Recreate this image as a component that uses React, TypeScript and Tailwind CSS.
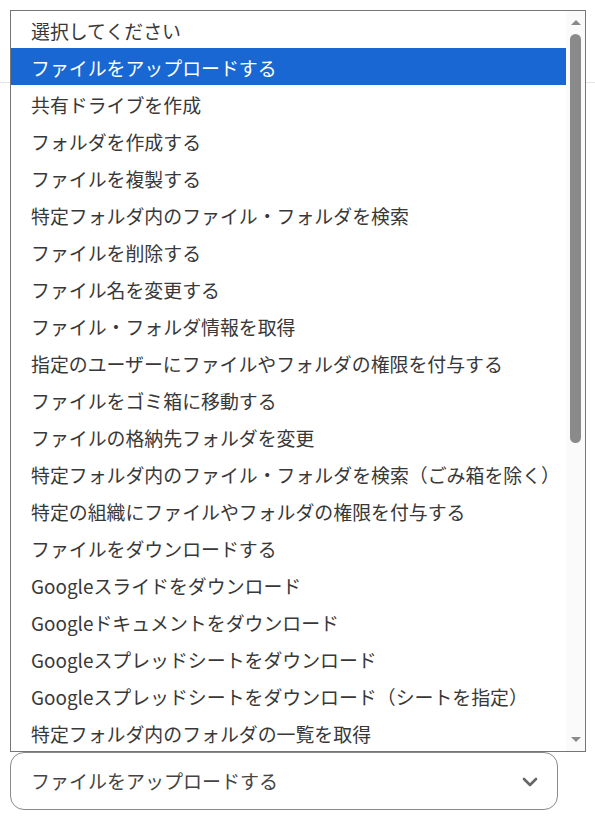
import React from "react";

const options = [
  "選択してください",
  "ファイルをアップロードする",
  "共有ドライブを作成",
  "フォルダを作成する",
  "ファイルを複製する",
  "特定フォルダ内のファイル・フォルダを検索",
  "ファイルを削除する",
  "ファイル名を変更する",
  "ファイル・フォルダ情報を取得",
  "指定のユーザーにファイルやフォルダの権限を付与する",
  "ファイルをゴミ箱に移動する",
  "ファイルの格納先フォルダを変更",
  "特定フォルダ内のファイル・フォルダを検索（ごみ箱を除く）",
  "特定の組織にファイルやフォルダの権限を付与する",
  "ファイルをダウンロードする",
  "Googleスライドをダウンロード",
  "Googleドキュメントをダウンロード",
  "Googleスプレッドシートをダウンロード",
  "Googleスプレッドシートをダウンロード（シートを指定）",
  "特定フォルダ内のフォルダの一覧を取得",
];

export default function App() {
  return (
    <div
      className="relative w-[595px] h-[817px] bg-white overflow-hidden flex flex-col"
      style={{ fontFamily: '"Noto Sans CJK JP", "Noto Sans", sans-serif' }}
    >
      <div className="h-[83px] border-b border-[#e3e3e3] shrink-0" />
      <div className="flex-1" />
      <div className="px-[10px] pb-[7px] relative">
        <div className="w-[548px] h-[58px] rounded-[14px] border border-[#8a8a8a] flex items-center justify-between pl-[20px] pr-[19px] text-[19px] text-[#444]">
          <span>ファイルをアップロードする</span>
          <svg width="16" height="10" viewBox="0 0 16 10" className="mt-[2px]">
            <path d="M2 2 L8 8 L14 2" fill="none" stroke="#666" strokeWidth="2.6" strokeLinecap="round" strokeLinejoin="round" />
          </svg>
        </div>
      </div>

      <div className="absolute left-[10px] top-[10px] w-[576px] h-[742px] border border-[#767676] bg-white flex">
        <div className="flex-1 flex flex-col">
          {options.map((o, i) => (
            <div
              key={i}
              className={
                "h-[37px] shrink-0 flex items-center pl-[20px] pt-[3px] text-[18.9px] whitespace-nowrap " +
                (i === 1 ? "bg-[#1967d2] text-white" : "text-[#383838]")
              }
            >
              {o}
            </div>
          ))}
        </div>
        <div className="w-[19px] bg-[#fafafa] flex flex-col items-center">
          <svg width="12" height="7" viewBox="0 0 12 7" className="mt-[8px] shrink-0">
            <path d="M1 6 L6 1 L11 6 Z" fill="#8a8a8a" />
          </svg>
          <div className="mt-[8px] w-[11px] h-[409px] rounded-full bg-[#8a8a8a] shrink-0" />
          <div className="flex-1" />
          <svg width="12" height="7" viewBox="0 0 12 7" className="mb-[8px] shrink-0">
            <path d="M1 1 L6 6 L11 1 Z" fill="#8a8a8a" />
          </svg>
        </div>
      </div>
    </div>
  );
}
